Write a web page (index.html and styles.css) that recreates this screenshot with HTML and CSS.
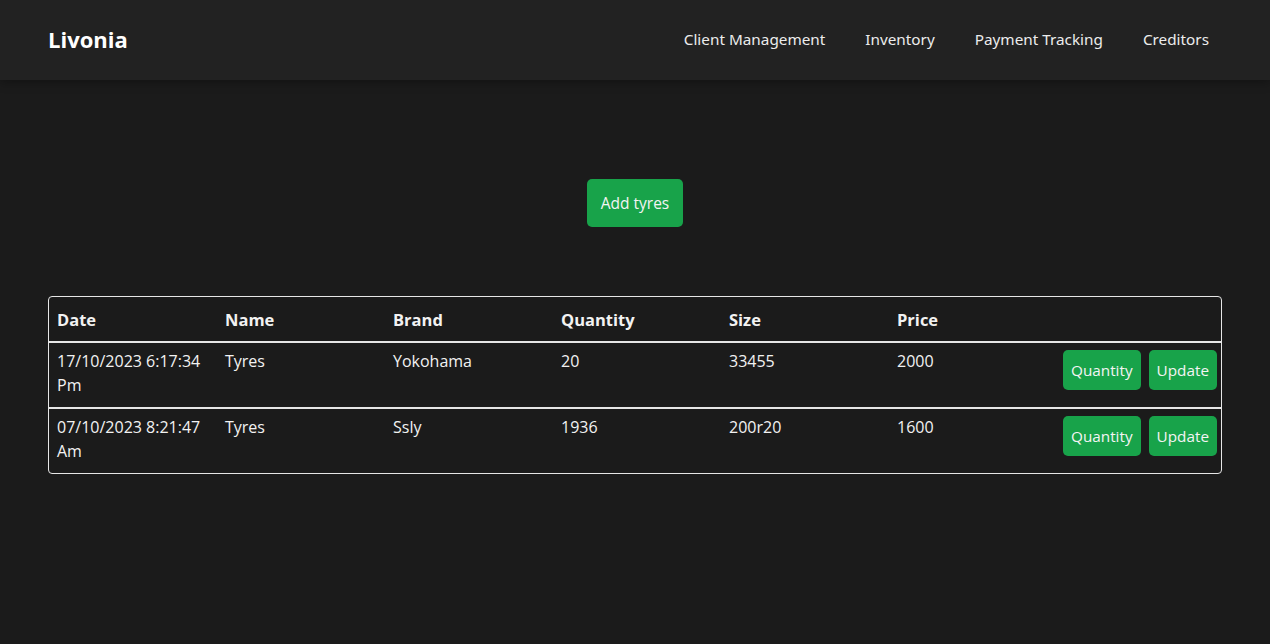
FILE: index.html
```html
<!DOCTYPE html>
<html lang="en">
<head>
<meta charset="utf-8">
<title>Livonia</title>
<link rel="stylesheet" href="styles.css">
</head>
<body>
<header class="topbar">
  <div class="brand">Livonia</div>
  <nav class="nav">
    <a href="#">Client Management</a>
    <a href="#">Inventory</a>
    <a href="#">Payment Tracking</a>
    <a href="#">Creditors</a>
  </nav>
</header>
<main class="content">
  <div class="add-wrap"><button class="btn btn-add">Add tyres</button></div>
  <table class="stock">
    <thead>
      <tr><th>Date</th><th>Name</th><th>Brand</th><th>Quantity</th><th>Size</th><th>Price</th><th></th></tr>
    </thead>
    <tbody>
      <tr>
        <td>17/10/2023 6:17:34 Pm</td><td>Tyres</td><td>Yokohama</td><td>20</td><td>33455</td><td>2000</td>
        <td class="actions"><div class="btn-row"><button class="btn btn-sm">Quantity</button><button class="btn btn-sm">Update</button></div></td>
      </tr>
      <tr>
        <td>07/10/2023 8:21:47 Am</td><td>Tyres</td><td>Ssly</td><td>1936</td><td>200r20</td><td>1600</td>
        <td class="actions"><div class="btn-row"><button class="btn btn-sm">Quantity</button><button class="btn btn-sm">Update</button></div></td>
      </tr>
    </tbody>
  </table>
</main>
</body>
</html>
```

FILE: styles.css
```css
* { box-sizing: border-box; }
html, body { margin: 0; padding: 0; }
body {
  background: #1b1b1b;
  color: #f2f2f2;
  font-family: "Open Sans", "Noto Sans", sans-serif;
  min-height: 644px;
}
.topbar {
  height: 80px;
  background: #222222;
  display: flex;
  align-items: center;
  justify-content: space-between;
  padding: 0 61px 2px 48px;
  box-shadow: 0 2px 10px rgba(0,0,0,0.35);
}
.brand {
  font-family: "Open Sans", sans-serif;
  font-weight: 700;
  font-size: 22px;
  color: #ffffff;
}
.nav { display: flex; gap: 40px; }
.nav a {
  color: #ececec;
  text-decoration: none;
  font-family: "Noto Sans", sans-serif;
  font-size: 15.3px;
}
.content { padding: 99px 48px 0 48px; }
.add-wrap { display: flex; justify-content: center; }
.btn {
  background: #18a34a;
  color: #f4f4f4;
  border: none;
  border-radius: 5px;
  font-family: "Open Sans", sans-serif;
  cursor: pointer;
}
.btn-add {
  width: 96px;
  height: 48px;
  font-size: 15.5px;
  font-weight: 500;
}
.stock {
  margin-top: 69px;
  width: 100%;
  border-collapse: separate;
  border-spacing: 0;
  border: 1px solid #e6e6e6;
  border-radius: 4px;
  table-layout: fixed;
}
.stock th, .stock td {
  text-align: left;
  vertical-align: top;
  padding: 0 8px;
  width: 168px;
}
.stock th:last-child, .stock td:last-child { width: auto; }
.stock th {
  height: 46px;
  font-weight: 700;
  font-size: 16.5px;
  vertical-align: middle;
  border-bottom: 2px solid #e6e6e6;
}
.stock td {
  font-size: 16px;
  line-height: 24px;
  height: 66px;
  padding-top: 6px;
}
.stock tbody tr:last-child td { height: 64px; }
.stock tbody tr:first-child td { border-bottom: 2px solid #e6e6e6; }
.stock td.actions {
  padding: 7px 4px 0 0;
}
.btn-row {
  display: flex;
  justify-content: flex-end;
  gap: 8px;
}
.btn-sm {
  height: 40px;
  padding: 0 8px;
  font-size: 15.3px;
  white-space: nowrap;
}
```
